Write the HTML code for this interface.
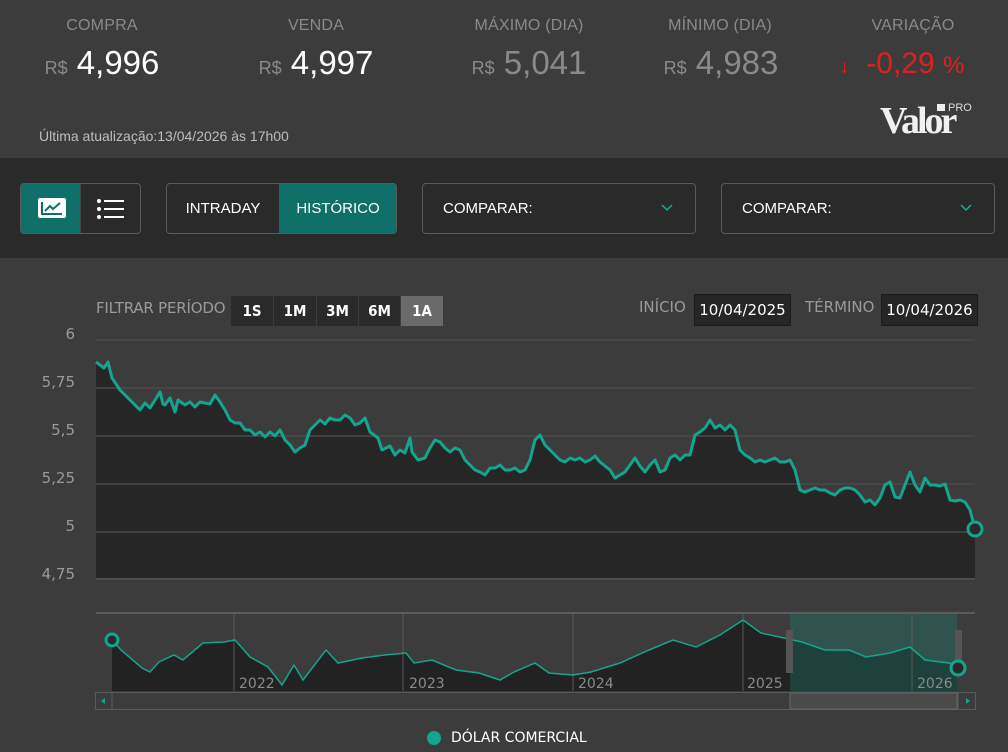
<!DOCTYPE html>
<html><head><meta charset="utf-8"><style>
*{margin:0;padding:0;box-sizing:border-box}
body{width:1008px;height:752px;background:#3c3c3c;font-family:"Liberation Sans",sans-serif;position:relative;overflow:hidden;color:#fff}
.a{position:absolute}
.lab{font-size:16px;color:#8a8a8a;text-align:center;width:160px;letter-spacing:.2px}
.val{font-size:33px;text-align:center;width:200px;white-space:nowrap}
.val small{font-size:18px;color:#8a8a8a}
.band{top:158px;left:0;width:1008px;height:100px;background:#2a2a2a}
.box{border:1px solid #5a5a5a;border-radius:4px;height:51px}
.dv{font-family:"DejaVu Sans",sans-serif}
.pb{font-family:"DejaVu Sans Condensed","DejaVu Sans",sans-serif;font-weight:bold;font-size:15px;background:#2a2a2a;color:#fff;height:30px;line-height:30px;text-align:center;top:296px}
</style></head><body>
<div class="a lab" style="left:22px;top:17px">COMPRA</div>
<div class="a lab" style="left:236px;top:17px">VENDA</div>
<div class="a lab" style="left:449px;top:17px">MÁXIMO (DIA)</div>
<div class="a lab" style="left:640px;top:17px">MÍNIMO (DIA)</div>
<div class="a lab" style="left:833px;top:17px">VARIAÇÃO</div>
<div class="a val" style="left:2px;top:44px"><small>R$</small> 4,996</div>
<div class="a val" style="left:216px;top:44px"><small>R$</small> 4,997</div>
<div class="a val" style="left:429px;top:44px;color:#8a8a8a"><small>R$</small> 5,041</div>
<div class="a val" style="left:621px;top:44px;color:#8a8a8a"><small>R$</small> 4,983</div>
<div class="a val" style="left:802px;top:47px;color:#e02020;font-size:30px"><span style="font-size:20px">↓</span>&nbsp; -0,29 <span style="font-size:24px">%</span></div>
<div class="a" style="left:39px;top:128px;font-size:14px;color:#bdbdbd">Última atualização:13/04/2026 às 17h00</div>
<div class="a" style="left:880px;top:101px;font-family:'Liberation Serif',serif;font-size:38px;font-weight:bold;color:#f0f0f0;letter-spacing:-3px;line-height:40px">Valor</div>
<div class="a" style="left:948px;top:102px;font-size:11px;color:#ddd">PRO</div>
<div class="a" style="left:937px;top:104px;width:8px;height:7px;background:#eee"></div>
<div class="a band"></div>
<div class="a box" style="left:20px;top:183px;width:121px;overflow:hidden">
 <div class="a" style="left:0;top:0;width:60px;height:49px;background:#0f706a;border-right:1px solid #444"></div>
 <svg class="a" style="left:17px;top:14px" width="28" height="22"><rect x="0" y="0" width="28" height="20" rx="2" fill="#fff"/><polyline points="4,4 4,16 24,16" fill="none" stroke="#0f706a" stroke-width="2"/><polyline points="7,13 12,8 15,11 22,5" fill="none" stroke="#0f706a" stroke-width="2"/></svg>
 <svg class="a" style="left:76px;top:15px" width="28" height="22"><g fill="#fff"><circle cx="2" cy="2" r="2"/><circle cx="2" cy="10" r="2"/><circle cx="2" cy="18" r="2"/><rect x="7" y="1" width="20" height="2"/><rect x="7" y="9" width="20" height="2"/><rect x="7" y="17" width="20" height="2"/></g></svg>
</div>
<div class="a box" style="left:166px;top:183px;width:231px;overflow:hidden;font-size:15px">
 <div class="a" style="left:0;top:0;width:112px;height:49px;line-height:49px;text-align:center">INTRADAY</div>
 <div class="a" style="left:112px;top:0;width:118px;height:49px;line-height:49px;text-align:center;background:#0f706a">HISTÓRICO</div>
</div>
<div class="a box" style="left:422px;top:183px;width:274px;font-size:15px;line-height:49px;padding-left:20px">COMPARAR:<svg class="a" style="right:22px;top:20px" width="12" height="8"><polyline points="1,1 6,6 11,1" fill="none" stroke="#1aa89a" stroke-width="1.5"/></svg></div>
<div class="a box" style="left:721px;top:183px;width:274px;font-size:15px;line-height:49px;padding-left:20px">COMPARAR:<svg class="a" style="right:22px;top:20px" width="12" height="8"><polyline points="1,1 6,6 11,1" fill="none" stroke="#1aa89a" stroke-width="1.5"/></svg></div>

<div class="a dv" style="left:96px;top:299px;font-size:15px;color:#9a9a9a;letter-spacing:-.2px">FILTRAR PERÍODO</div>
<div class="a pb" style="left:231px;width:42px">1S</div>
<div class="a pb" style="left:274px;width:42px">1M</div>
<div class="a pb" style="left:317px;width:41px">3M</div>
<div class="a pb" style="left:359px;width:41px">6M</div>
<div class="a pb" style="left:401px;width:42px;background:#6a6a6a">1A</div>
<div class="a dv" style="left:639px;top:298px;font-size:15px;color:#9a9a9a">INÍCIO</div>
<div class="a dv" style="left:694px;top:294px;width:97px;height:32px;line-height:30px;background:#262626;border:1px solid #1c1c1c;font-size:15px;text-align:center">10/04/2025</div>
<div class="a dv" style="left:805px;top:298px;font-size:15px;color:#9a9a9a">TÉRMINO</div>
<div class="a dv" style="left:881px;top:294px;width:97px;height:32px;line-height:30px;background:#262626;border:1px solid #1c1c1c;font-size:15px;text-align:center">10/04/2026</div>

<svg class="a" style="left:0;top:320px" width="1008" height="400">
<g font-family="DejaVu Sans,sans-serif" font-size="15" fill="#9a9a9a" text-anchor="end">
<text x="75" y="19">6</text><text x="75" y="67">5,75</text><text x="75" y="115">5,5</text><text x="75" y="163">5,25</text><text x="75" y="211">5</text><text x="75" y="259">4,75</text></g>
<g transform="translate(0,-320)">
<polygon fill="#262626" points="96,362 104,368 108,362 112,378 120,390 130,400 140,410 145,403 150,408 155,400 160,392 163,404 165,405 170,398 175,412 178,400 185,405 190,402 195,407 200,402 210,404 215,395 220,402 225,410 230,420 235,423 240,423 245,430 250,430 255,435 260,432 265,437 270,432 275,436 280,430 285,440 290,445 295,452 300,448 305,445 310,430 315,425 320,420 325,424 330,418 335,420 340,420 345,415 350,418 355,425 360,423 365,418 370,432 378,438 382,450 390,446 395,455 400,450 405,453 410,438 412,452 418,460 425,458 430,448 435,440 440,442 445,448 450,452 455,448 460,450 465,460 470,465 475,470 480,472 485,475 490,468 495,468 500,465 505,470 510,470 515,468 520,472 525,470 530,460 535,440 540,435 545,445 550,450 555,455 560,460 565,462 570,458 575,460 580,458 585,462 590,460 595,456 600,462 605,466 610,470 615,478 620,475 625,472 630,465 635,458 640,466 645,472 650,465 655,460 660,472 665,470 670,458 675,455 680,460 685,455 690,455 695,435 700,432 705,428 710,420 715,428 720,425 725,430 730,425 735,430 740,450 745,455 750,458 755,462 760,460 765,462 770,460 775,458 780,462 785,462 790,460 795,470 800,490 805,492 810,490 815,488 820,490 825,490 830,493 835,495 840,490 845,488 850,488 855,490 860,495 865,502 870,500 875,505 880,498 885,485 890,482 895,497 900,498 905,485 910,472 915,485 920,492 925,478 930,485 935,485 940,486 945,484 950,500 955,501 960,500 965,502 970,510 975,529 975,578 96,578"/>
<g stroke="#4a4a4a" stroke-width="1.5"><line x1="96" x2="975" y1="340" y2="340"/><line x1="96" x2="975" y1="388" y2="388"/><line x1="96" x2="975" y1="436" y2="436"/><line x1="96" x2="975" y1="484" y2="484"/><line x1="96" x2="975" y1="532" y2="532"/><line x1="96" x2="975" y1="579" y2="579" stroke="#555"/></g>
<polyline fill="none" stroke="#14a58e" stroke-width="3" stroke-linejoin="round" points="96,362 104,368 108,362 112,378 120,390 130,400 140,410 145,403 150,408 155,400 160,392 163,404 165,405 170,398 175,412 178,400 185,405 190,402 195,407 200,402 210,404 215,395 220,402 225,410 230,420 235,423 240,423 245,430 250,430 255,435 260,432 265,437 270,432 275,436 280,430 285,440 290,445 295,452 300,448 305,445 310,430 315,425 320,420 325,424 330,418 335,420 340,420 345,415 350,418 355,425 360,423 365,418 370,432 378,438 382,450 390,446 395,455 400,450 405,453 410,438 412,452 418,460 425,458 430,448 435,440 440,442 445,448 450,452 455,448 460,450 465,460 470,465 475,470 480,472 485,475 490,468 495,468 500,465 505,470 510,470 515,468 520,472 525,470 530,460 535,440 540,435 545,445 550,450 555,455 560,460 565,462 570,458 575,460 580,458 585,462 590,460 595,456 600,462 605,466 610,470 615,478 620,475 625,472 630,465 635,458 640,466 645,472 650,465 655,460 660,472 665,470 670,458 675,455 680,460 685,455 690,455 695,435 700,432 705,428 710,420 715,428 720,425 725,430 730,425 735,430 740,450 745,455 750,458 755,462 760,460 765,462 770,460 775,458 780,462 785,462 790,460 795,470 800,490 805,492 810,490 815,488 820,490 825,490 830,493 835,495 840,490 845,488 850,488 855,490 860,495 865,502 870,500 875,505 880,498 885,485 890,482 895,497 900,498 905,485 910,472 915,485 920,492 925,478 930,485 935,485 940,486 945,484 950,500 955,501 960,500 965,502 970,510 975,529"/>
<circle cx="975" cy="529" r="7" fill="#2a2a2a" stroke="#14a58e" stroke-width="3"/>

<polygon fill="#222" points="112,640 121,650 142,668 150,672 159,662 174,655 183,660 203,643 224,642 235,640 250,657 268,667 282,685 294,665 303,680 326,650 338,663 362,658 385,655 406,653 414,663 432,660 456,670 479,673 500,680 514,672 535,663 549,673 573,675 591,672 620,663 649,650 673,640 696,647 720,635 743,620 761,633 784,638 802,642 825,650 849,650 866,657 890,653 910,647 925,660 949,663 957,668 957,691 112,691"/>
<rect x="790" y="613" width="167" height="78" fill="#1a8a78" fill-opacity="0.3"/>
<g stroke="#5a5a5a" stroke-width="1"><line x1="96" x2="975" y1="613" y2="613" stroke="#666" stroke-width="1.5"/><line x1="234" x2="234" y1="613" y2="691"/><line x1="403" x2="403" y1="613" y2="691"/><line x1="573" x2="573" y1="613" y2="691"/><line x1="743" x2="743" y1="613" y2="691"/><line x1="912" x2="912" y1="613" y2="691"/></g>
<polyline fill="none" stroke="#14a58e" stroke-width="1.5" points="112,640 121,650 142,668 150,672 159,662 174,655 183,660 203,643 224,642 235,640 250,657 268,667 282,685 294,665 303,680 326,650 338,663 362,658 385,655 406,653 414,663 432,660 456,670 479,673 500,680 514,672 535,663 549,673 573,675 591,672 620,663 649,650 673,640 696,647 720,635 743,620 761,633 784,638 802,642 825,650 849,650 866,657 890,653 910,647 925,660 949,663 957,668"/>
<g font-family="DejaVu Sans,sans-serif" font-size="14" fill="#8a8a8a"><text x="239" y="688">2022</text><text x="409" y="688">2023</text><text x="578" y="688">2024</text><text x="747" y="688">2025</text><text x="917" y="688">2026</text></g>
<rect x="786" y="630" width="7" height="43" fill="#555"/><rect x="955" y="630" width="7" height="43" fill="#555"/>
<circle cx="112" cy="640" r="6" fill="#2a2a2a" stroke="#14a58e" stroke-width="3"/>
<circle cx="958" cy="668" r="7" fill="#2a2a2a" stroke="#14a58e" stroke-width="3"/>
<rect x="95.5" y="692.5" width="880" height="17" fill="#3c3c3c" stroke="#5a5a5a"/>
<rect x="790" y="693" width="167" height="16" fill="#4a4a4a" stroke="#666"/>
<line x1="112" x2="112" y1="693" y2="709" stroke="#5a5a5a"/><line x1="958" x2="958" y1="693" y2="709" stroke="#5a5a5a"/>
<polygon points="105,698 101,701 105,704" fill="#14a58e"/><polygon points="966,698 970,701 966,704" fill="#14a58e"/>
</g></svg>
<div class="a" style="left:427px;top:731px;width:14px;height:14px;border-radius:50%;background:#14a58e"></div>
<div class="a dv" style="left:451px;top:730px;font-size:14px;color:#fff">DÓLAR COMERCIAL</div>
</body></html>
